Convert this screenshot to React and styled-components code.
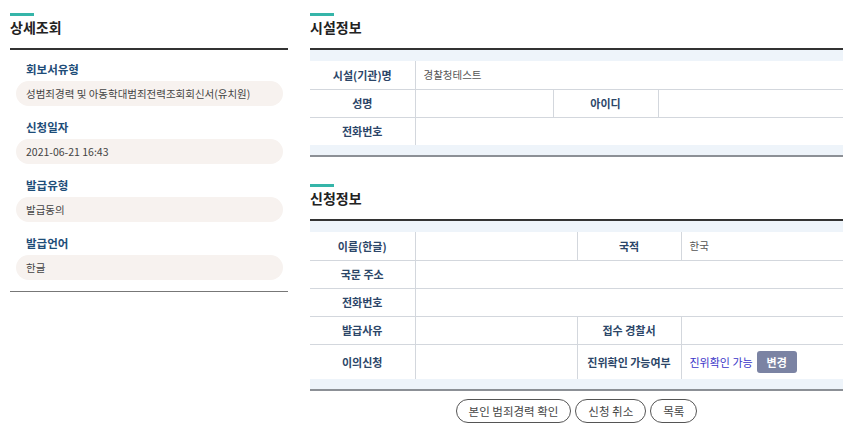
import React from "react";
import styled, { createGlobalStyle } from "styled-components";

const GlobalStyle = createGlobalStyle`
  html, body {
    margin: 0;
    padding: 0;
    background: #fff;
  }
  body {
    font-family: "Noto Sans CJK KR", "Noto Sans", sans-serif;
    color: #333;
  }
`;

const Page = styled.div`
  display: flex;
  align-items: flex-start;
  gap: 22px;
  padding: 13px 15px 0 10px;
  width: 858px;
  box-sizing: border-box;
`;

const LeftPanel = styled.aside`
  width: 278px;
  flex-shrink: 0;
`;

const RightPanel = styled.main`
  flex: 1;
  min-width: 0;
`;

const Section = styled.section`
  & + & {
    margin-top: 27px;
  }
`;

const Heading = styled.h2`
  margin: 0;
  padding-top: 1px;
  height: 34px;
  font-size: 14px;
  font-weight: 700;
  color: #222;
  line-height: 27px;
  position: relative;
  &::before {
    content: "";
    position: absolute;
    left: 0;
    top: 0;
    width: 24px;
    height: 3px;
    background: #35b5a9;
  }
`;

const InfoList = styled.div`
  border-top: 2px solid #333;
  border-bottom: 1px solid #777;
  padding: 9px 5px 11px 6px;
  display: flex;
  flex-direction: column;
  gap: 11px;
`;

const InfoItem = styled.div`
  display: flex;
  flex-direction: column;
  gap: 2px;
`;

const InfoLabel = styled.div`
  padding-left: 10px;
  height: 20px;
  line-height: 20px;
  font-size: 11.5px;
  font-weight: 700;
  color: #1e4d78;
`;

const InfoValue = styled.div`
  height: 25px;
  line-height: 25px;
  border-radius: 13px;
  background: #f7f2ef;
  padding-left: 10px;
  font-size: 10.5px;
  color: #444;
`;

const TableWrap = styled.div`
  border-top: 2px solid #333;
  border-bottom: 2px solid #8c9096;
  background: #eef4fa;
  padding: 11px 0 10px;
`;

const Table = styled.table`
  width: 100%;
  border-collapse: collapse;
  table-layout: fixed;
  background: #fff;
`;

const Row = styled.tr`
  height: ${(p) => (p.$tall ? 35 : 28)}px;
  border-bottom: 1px solid #d3d7dd;
  &:last-child {
    border-bottom: none;
  }
`;

const Th = styled.th`
  font-size: 11px;
  font-weight: 700;
  color: #2c4668;
  text-align: center;
  padding: 0;
  border-right: 1px solid #d3d7dd;
  border-left: 1px solid #d3d7dd;
  &:first-child {
    border-left: none;
  }
`;

const Td = styled.td`
  font-size: 10.5px;
  color: #555;
  padding: 0 0 0 8px;
  border-right: 1px solid #d3d7dd;
  &:last-child {
    border-right: none;
  }
`;

const VerifyText = styled.span`
  color: #3a35c8;
  font-size: 11px;
  vertical-align: middle;
`;

const SmallButton = styled.button`
  margin-left: 4px;
  width: 40px;
  height: 22px;
  border: none;
  border-radius: 3px;
  background: #7b83a3;
  color: #fff;
  font-family: inherit;
  font-size: 11px;
  font-weight: 700;
  vertical-align: middle;
  cursor: pointer;
`;

const ButtonRow = styled.div`
  display: flex;
  justify-content: center;
  gap: 4px;
  margin-top: 8px;
`;

const PillButton = styled.button`
  height: 24px;
  padding: 0 12px;
  border: 1.5px solid #555;
  border-radius: 13px;
  background: #fff;
  font-family: inherit;
  font-size: 11.5px;
  color: #444;
  cursor: pointer;
`;

const details = [
  { label: "회보서유형", value: "성범죄경력 및 아동학대범죄전력조회회신서(유치원)" },
  { label: "신청일자", value: "2021-06-21 16:43" },
  { label: "발급유형", value: "발급동의" },
  { label: "발급언어", value: "한글" },
];

export default function App() {
  return (
    <>
      <GlobalStyle />
      <Page>
        <LeftPanel>
          <Heading>상세조회</Heading>
          <InfoList>
            {details.map((d) => (
              <InfoItem key={d.label}>
                <InfoLabel>{d.label}</InfoLabel>
                <InfoValue>{d.value}</InfoValue>
              </InfoItem>
            ))}
          </InfoList>
        </LeftPanel>

        <RightPanel>
          <Section>
            <Heading>시설정보</Heading>
            <TableWrap>
              <Table>
                <colgroup>
                  <col style={{ width: 105 }} />
                  <col style={{ width: 138 }} />
                  <col style={{ width: 105 }} />
                  <col />
                </colgroup>
                <tbody>
                  <Row>
                    <Th>시설(기관)명</Th>
                    <Td colSpan={3}>경찰청테스트</Td>
                  </Row>
                  <Row>
                    <Th>성명</Th>
                    <Td></Td>
                    <Th>아이디</Th>
                    <Td></Td>
                  </Row>
                  <Row>
                    <Th>전화번호</Th>
                    <Td colSpan={3}></Td>
                  </Row>
                </tbody>
              </Table>
            </TableWrap>
          </Section>

          <Section>
            <Heading>신청정보</Heading>
            <TableWrap>
              <Table>
                <colgroup>
                  <col style={{ width: 105 }} />
                  <col style={{ width: 162 }} />
                  <col style={{ width: 104 }} />
                  <col />
                </colgroup>
                <tbody>
                  <Row>
                    <Th>이름(한글)</Th>
                    <Td></Td>
                    <Th>국적</Th>
                    <Td>한국</Td>
                  </Row>
                  <Row>
                    <Th>국문 주소</Th>
                    <Td colSpan={3}></Td>
                  </Row>
                  <Row>
                    <Th>전화번호</Th>
                    <Td colSpan={3}></Td>
                  </Row>
                  <Row>
                    <Th>발급사유</Th>
                    <Td></Td>
                    <Th>접수 경찰서</Th>
                    <Td></Td>
                  </Row>
                  <Row $tall>
                    <Th>이의신청</Th>
                    <Td></Td>
                    <Th>진위확인 가능여부</Th>
                    <Td>
                      <VerifyText>진위확인 가능</VerifyText>
                      <SmallButton>변경</SmallButton>
                    </Td>
                  </Row>
                </tbody>
              </Table>
            </TableWrap>
          </Section>

          <ButtonRow>
            <PillButton>본인 범죄경력 확인</PillButton>
            <PillButton>신청 취소</PillButton>
            <PillButton>목록</PillButton>
          </ButtonRow>
        </RightPanel>
      </Page>
    </>
  );
}
